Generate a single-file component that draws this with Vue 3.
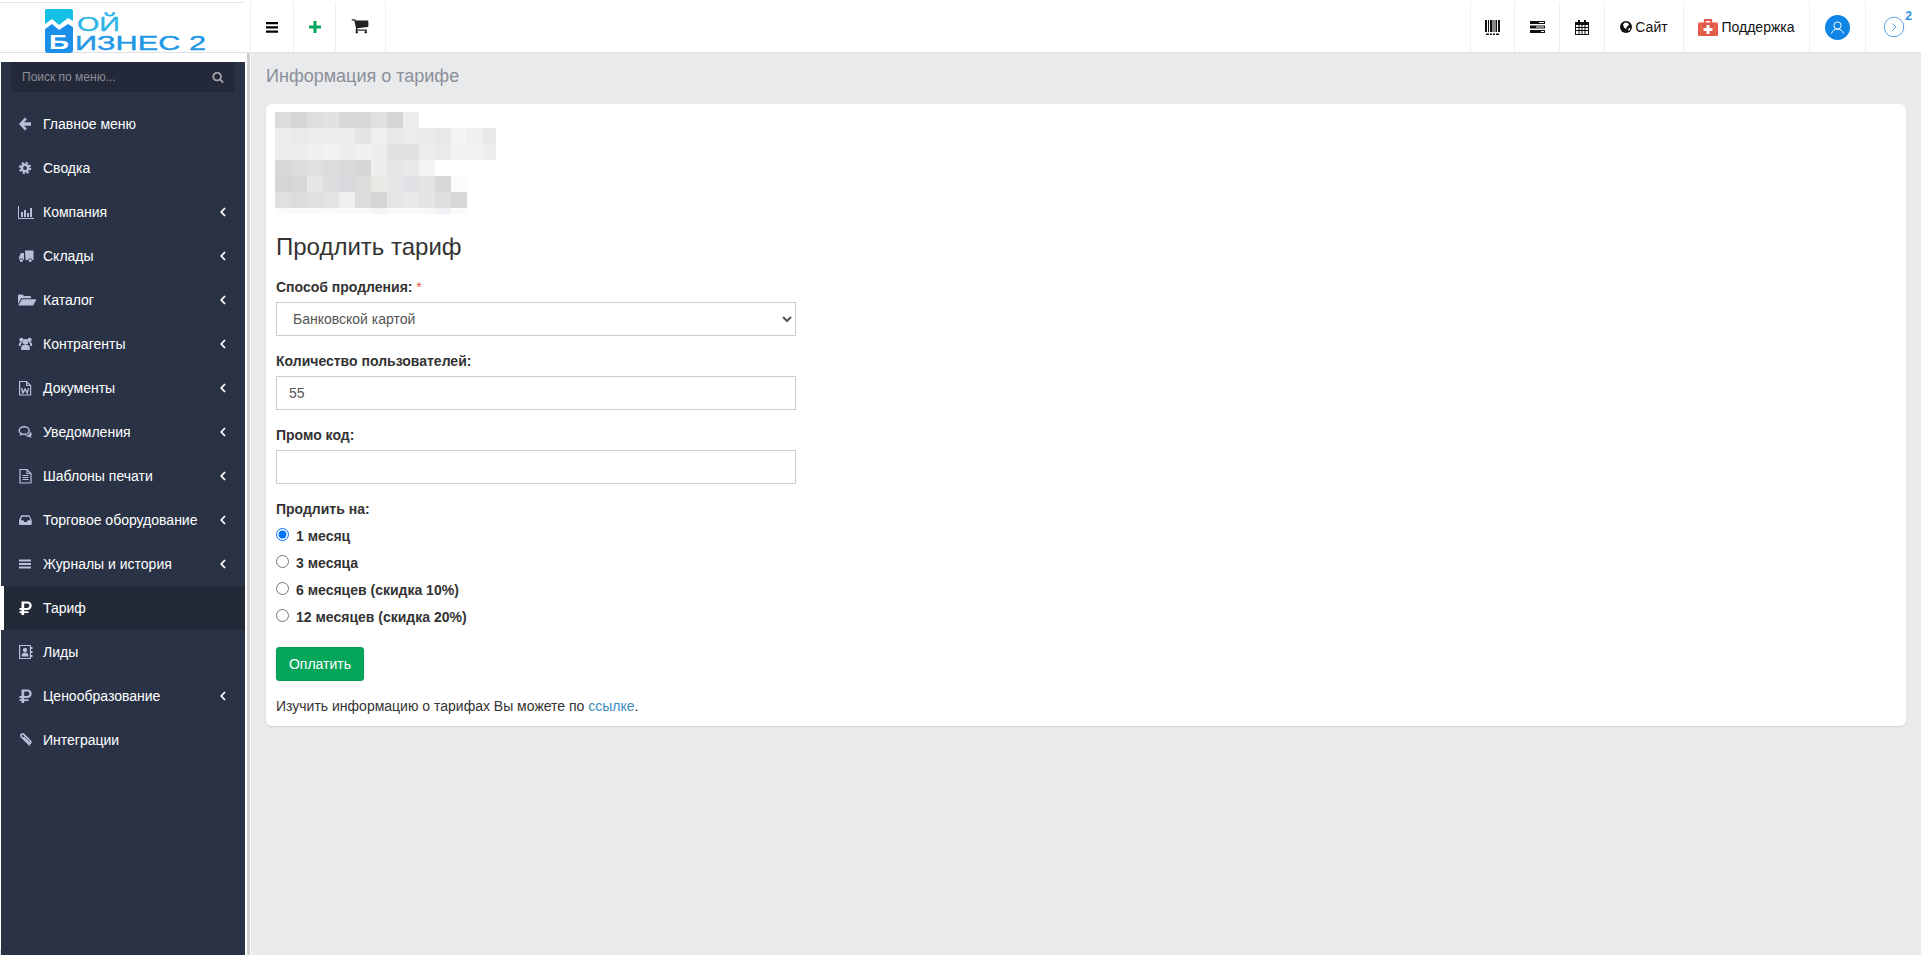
<script setup>
const ICONS = {
  arrow: '<path fill="currentColor" d="M7 1.500 1 8l6 6.500 1.900-1.900L6 9.800h7V6.200H6l2.900-2.800z"/>',
  gear: '<circle cx="7" cy="8" r="3.200" fill="none" stroke="currentColor" stroke-width="2.600"/><circle cx="7" cy="8" r="5.200" fill="none" stroke="currentColor" stroke-width="2" stroke-dasharray="2.200 1.880"/>',
  chart: '<path fill="none" stroke="currentColor" d="M.5 2v12.500h15.500"/><path fill="currentColor" d="M3 8h2v5H3zM6 6h2v7H6zM9 9h2v4H9zM12 4h2v9h-2z"/>',
  truck: '<path fill="currentColor" d="M7 2.500h8.500v9.500h-1.200a2.200 2.200 0 0 0-4.300 0H7.500zM6 5v7h-.5a2.200 2.200 0 0 0-4.300 0H1V9l2-4z"/><circle cx="3.400" cy="12.600" r="1.500" fill="currentColor"/><circle cx="12.200" cy="12.600" r="1.500" fill="currentColor"/>',
  folder: '<path fill="currentColor" d="M0 12V3.500C0 3 .4 2.600 1 2.600h3.600l1.400 1.400h6c.5 0 1 .4 1 1v1.200H4.200c-.7 0-1.200.3-1.600 1zM4.500 7.200H17.500c.6 0 .8.500.5 1L15.500 13c-.2.400-.6.600-1 .6H1.200c-.6 0-.8-.4-.5-.9L3.400 8c.3-.5.600-.8 1.100-.8z"/>',
  users: '<circle cx="7.500" cy="5.800" r="2.900" fill="currentColor"/><circle cx="3.400" cy="3.800" r="2.100" fill="currentColor"/><circle cx="11.600" cy="3.800" r="2.100" fill="currentColor"/><path fill="currentColor" d="M3.200 14c-.4-4 1-5 2.400-5h3.800c1.400 0 2.800 1 2.400 5zM.8 10c0-3 .8-4 2-4h1.400C3.500 7 2.700 8 2.600 10zM14.200 10c0-3-.8-4-2-4h-1.400c.7 1 1.500 2 1.600 4z"/>',
  word: '<path fill="none" stroke="currentColor" stroke-width="1.200" d="M1.600 1.500h7l4 4v9.500h-11zM8.600 1.500v4h4"/><path fill="none" stroke="currentColor" stroke-width="1.300" d="M3.500 8l1.400 5L7 9l2.100 4 1.400-5"/>',
  comments: '<ellipse cx="6.200" cy="6.500" rx="5" ry="3.800" fill="none" stroke="currentColor" stroke-width="1.400"/><path fill="currentColor" d="M2.200 9.300 1.800 12l3-1.600zM12 7.500c2.200 1.300 2.200 3.600.7 4.700l.6 1.800-2.600-1.300c-1.600.2-3-.2-3.800-1.100 2.600.2 5.300-.9 5.100-4.100z"/>',
  file: '<path fill="none" stroke="currentColor" stroke-width="1.200" d="M2 1.500h7l4 4v9.500H2zM9 1.500v4h4"/><path fill="none" stroke="currentColor" d="M4.500 7.500h6M4.500 9.500h6M4.500 11.500h6"/>',
  inbox: '<path fill="currentColor" fill-rule="evenodd" d="M3.500 3.200h7.200c.5 0 .8.200 1 .6l2 4.500v3.600c0 .7-.5 1.100-1.200 1.100H2.200C1.500 13 1 12.600 1 11.900V8.300l2-4.500c.2-.4.200-.6.500-.6zm.6 1.500L2.700 8.300h2.700l.9 1.600h2.600l.9-1.600h2.700l-1.400-3.600z"/>',
  bars: '<path fill="currentColor" d="M1 3.500h12v2H1zM1 7h12v2H1zM1 10.500h12v2H1z"/>',
  book: '<path fill="none" stroke="currentColor" stroke-width="1.200" d="M1.600 1.500h10.800v13H1.600z"/><circle cx="7" cy="6" r="2.200" fill="currentColor"/><path fill="currentColor" d="M3.500 12.500c0-3 1.500-4 3.500-4s3.500 1 3.500 4zM13 3h1.500v2H13zM13 7h1.500v2H13zM13 11h1.500v2H13z"/>',
  clip: '<path fill="none" stroke="currentColor" stroke-width="1.600" d="M12 13.500 3.500 5C1.800 3 4.300 1 6 2.600l6.600 6.700c1 1.100-.3 2.500-1.400 1.500L5.500 5"/>',
  rub: '<path fill="currentColor" fill-rule="evenodd" d="M3.500 1.500h6a4.200 4.200 0 0 1 0 8.400H6.200v1.400h4.300v1.800H6.200v2H3.500v-2h-2v-1.800h2V9.900h-2V7.900h2zM6.200 3.600v4.300h3.100a2.150 2.150 0 0 0 0-4.300z"/>'
}

const menu = [
  { label: 'Главное меню', icon: 'arrow' },
  { label: 'Сводка', icon: 'gear' },
  { label: 'Компания', icon: 'chart', more: true },
  { label: 'Склады', icon: 'truck', more: true },
  { label: 'Каталог', icon: 'folder', more: true },
  { label: 'Контрагенты', icon: 'users', more: true },
  { label: 'Документы', icon: 'word', more: true },
  { label: 'Уведомления', icon: 'comments', more: true },
  { label: 'Шаблоны печати', icon: 'file', more: true },
  { label: 'Торговое оборудование', icon: 'inbox', more: true },
  { label: 'Журналы и история', icon: 'bars', more: true },
  { label: 'Тариф', icon: 'rub', active: true },
  { label: 'Лиды', icon: 'book' },
  { label: 'Ценообразование', icon: 'rub', more: true },
  { label: 'Интеграции', icon: 'clip' }
]

const mosaic = [
  ['dcdcdc','d6d6d6','dedede','e2e2e2','d8d8d6','d8d8d8','dfe0e0','d5d5d5','ecedee'],
  ['edecea','e9eaea','ececec','eeedeb','eceded','e4e4e4','efefef','e8e8e8','ececec','ebebeb','e8e8e8','f5f5f5','f0f0f0','e9e9e9'],
  ['eeedec','eeeeee','f0f0f0','f2f2f2','ecefee','eff0f0','eeeeee','e1e1e1','e2e2e2','eeecec','ebebeb','f1f1f1','f1f1f1','eeeeee'],
  ['d8d8d8','dcdcdc','e0e0e0','dcdcdc','d9d9d9','d6d6d4','eeeeee','e6e6e6','e8e8e8','f5f5f5'],
  ['d5d5d5','d5d7d9','e6e6e4','dedcdc','dadade','dbdcdc','ebe9e6','e4e6e8','e0e2e6','e4e4e4','d8d8d8','fafbfd'],
  ['e0e0e0','dddcda','dfe0df','e2e3e3','efefed','dddddd','d5d4d6','e4e6e8','e8e9e9','e3e4e4','dededc','d8d8da'],
  ['fbfbfb','f9f9f9','fafafa','fbfbfb','fafafa','f9f9f9','f5f5f5','fafafa','fafafa','f8f8f8','f1f2f5','fafafa']
]

const periods = ['1 месяц', '3 месяца', '6 месяцев (скидка 10%)', '12 месяцев (скидка 20%)']
</script>

<template>
  <div class="app">
    <header class="top">
      <div class="logo">
        <svg width="245" height="52" viewBox="0 0 245 52">
          <path d="M0 2.500h245" stroke="#e6e6f2" fill="none" />
          <path fill="#14c0e6" d="M47 9h24c1.500 0 2 1 2 2v10l-5-3-9 7-7-6-7 5V11c0-1 .5-2 2-2z" />
          <path fill="#1c8fe8" d="M45 29l7-5 7 6 9-6 5 3v23c0 2-1 3-3 3H48c-2 0-3-1-3-3z" />
          <text x="49" y="49" class="logo-b" textLength="20" lengthAdjust="spacingAndGlyphs">Б</text>
          <text x="77" y="31" class="logo-a" textLength="43" lengthAdjust="spacingAndGlyphs">ОЙ</text>
          <text x="75" y="50" class="logo-c" textLength="131" lengthAdjust="spacingAndGlyphs">ИЗНЕС 2</text>
        </svg>
      </div>
      <div class="cell w43 first">
        <svg width="12" height="11" viewBox="0 0 12 11"><path fill="#000" d="M0 0h12v2.200H0zM0 4.300h12v2.200H0zM0 8.600h12v2.200H0z" /></svg>
      </div>
      <div class="cell w42">
        <svg width="12" height="12" viewBox="0 0 12 12"><path fill="#00a65a" d="M4.500 0h3v4.500H12v3H7.500V12h-3V7.500H0v-3h4.500z" /></svg>
      </div>
      <div class="cell w50">
        <svg class="cart" width="18" height="18" viewBox="0 0 1664 1792"><path fill="#222" d="M640 1408q0 52-38 90t-90 38-90-38-38-90 38-90 90-38 90 38 38 90zm896 0q0 52-38 90t-90 38-90-38-38-90 38-90 90-38 90 38 38 90zm128-1088v512q0 24-16.500 42.500t-40.500 21.500l-1044 122q13 60 13 70 0 16-24 64h920q26 0 45 19t19 45-19 45-45 19h-1024q-26 0-45-19t-19-45q0-11 8-31.500t16-36 21.500-40 15.500-29.500l-177-823h-204q-26 0-45-19t-19-45 19-45 45-19h256q16 0 28.500 6.500t19.500 15.500 13 24.500 8 26 5.500 29.500 4.500 26h1201q26 0 45 19t19 45z" /></svg>
      </div>
      <div class="cell spacer"></div>
      <div class="cell w44">
        <svg width="15" height="15" viewBox="0 0 15 15"><path fill="#111" d="M0 0h2v12H0zM3 0h1v12H3zM5 0h2.500v12H5zM8.500 0h1v12h-1zM10.500 0h1.500v12h-1.500zM13 0h2v12h-2zM1 13.500h3V15H1zM5 13.500h2V15H5zM8 13.500h2V15H8zM11 13.500h3V15h-3z" /></svg>
      </div>
      <div class="cell w45">
        <svg width="15" height="12" viewBox="0 0 15 12"><path fill="#111" fill-rule="evenodd" d="M0 0h15v3H0zM0 4.500h15v3H0zM0 9h15v3H0zM9 1v1h5V1zM6 5.500v1h8v-1zM11 10v1h3v-1z" /></svg>
      </div>
      <div class="cell w45">
        <svg width="14" height="15" viewBox="0 0 14 15"><path fill="#111" fill-rule="evenodd" d="M3 0h2v2h4V0h2v2h3v13H0V2h3zM1 5v2h2.500V5zM4.500 5v2H6.500V5zM7.500 5v2h2V5zM10.500 5v2H13V5zM1 8v2h2.500V8zM4.500 8v2H6.500V8zM7.500 8v2h2V8zM10.500 8v2H13V8zM1 11v3h2.500v-3zM4.500 11v3H6.500v-3zM7.500 11v3h2v-3zM10.500 11v3H13v-3z" /></svg>
      </div>
      <div class="cell w79 txt">
        <svg width="12" height="12" viewBox="0 0 12 12"><circle cx="6" cy="6" r="6" fill="#111" /><path fill="#fff" d="M5 1.500 8 2l1 2-2 1.500-1 2.500-2-1.500-1-3zM9 7l1.500.5L9 10 8 9z" /></svg>
        <span>Сайт</span>
      </div>
      <div class="cell w126 txt">
        <svg width="20" height="17" viewBox="0 0 20 17"><path fill="none" stroke="#e2574c" stroke-width="1.800" d="M6.800 4V1h6.400V4" /><rect y="3.500" width="20" height="13.500" rx="1.500" fill="#e2574c" /><path fill="#e8a33d" d="M2.500 3.500h1V17h-1zM16.500 3.500h1V17h-1z" opacity=".55" /><path fill="#fff" d="M8.500 6h3v3h3v3h-3v3h-3v-3h-3V9h3z" /></svg>
        <span>Поддержка</span>
      </div>
      <div class="cell w56">
        <svg width="25" height="25" viewBox="0 0 25 25"><circle cx="12.500" cy="12.500" r="12.500" fill="#0f85e5" /><circle cx="12.500" cy="10.500" r="3.600" fill="none" stroke="#fff" /><path fill="none" stroke="#fff" d="M6.500 18.500c.8-3 3.500-4.500 6-4.500s5.200 1.500 6 4.500" /></svg>
      </div>
      <div class="cell w56 notify">
        <svg width="22" height="22" viewBox="0 0 22 22"><circle cx="11" cy="11" r="9.800" fill="none" stroke="#5ba2e4" /><path fill="none" stroke="#5ba2e4" d="M9.500 7.500 13 11l-3.500 3.500" /></svg>
        <b class="badge">2</b>
      </div>
    </header>

    <div class="body">
      <div class="rail">
        <div class="rail-inner">
          <aside class="side">
            <div class="search">
              <input class="search-input" type="text" placeholder="Поиск по меню..." />
              <svg width="12" height="12" viewBox="0 0 1792 1792"><path fill="#a6a8ad" d="M1216 832q0-185-131.500-316.500t-316.500-131.500-316.500 131.500-131.500 316.500 131.500 316.500 316.500 131.500 316.500-131.500 131.500-316.500zm512 832q0 52-38 90t-90 38q-54 0-90-38l-343-342q-179 124-399 124-143 0-273.500-55.500t-225-150-150-225-55.500-273.500 55.500-273.500 150-225 225-150 273.500-55.500 273.500 55.500 225 150 150 225 55.500 273.500q0 220-124 399l343 343q37 37 37 90z" /></svg>
            </div>
            <nav class="menu">
              <a v-for="item in menu" :key="item.label" class="item" :class="{ active: item.active }">
                <span class="ico">
                  <svg width="16" height="16" viewBox="0 0 16 16" v-html="ICONS[item.icon]"></svg>
                </span>
                <span class="label">{{ item.label }}</span>
                <svg v-if="item.more" class="chev" width="6" height="10" viewBox="0 0 6 10"><path fill="none" stroke="#fff" stroke-width="1.800" d="M5 1 1.300 5 5 9" /></svg>
              </a>
            </nav>
          </aside>
        </div>
        <div class="gutter"></div>
      </div>

      <main class="main">
        <div class="title">Информация о тарифе</div>
        <section class="card">
          <div class="mosaic">
            <div v-for="(row, r) in mosaic" :key="r" class="m-row">
              <i v-for="(c, k) in row" :key="k" :style="{ background: '#' + c }"></i>
            </div>
          </div>
          <h2 class="heading">Продлить тариф</h2>
          <div class="group">
            <label class="lab">Способ продления: <em>*</em></label>
            <select class="ctl">
              <option>Банковской картой</option>
            </select>
          </div>
          <div class="group">
            <label class="lab">Количество пользователей:</label>
            <input class="ctl" type="text" value="55" />
          </div>
          <div class="group">
            <label class="lab">Промо код:</label>
            <input class="ctl" type="text" />
          </div>
          <div class="lab">Продлить на:</div>
          <div class="radios">
            <label v-for="(p, i) in periods" :key="p" class="radio">
              <input type="radio" name="period" :checked="i === 0" />
              <span>{{ p }}</span>
            </label>
          </div>
          <button class="pay" type="button">Оплатить</button>
          <p class="note">Изучить информацию о тарифах Вы можете по <a>ссылке</a>.</p>
        </section>
      </main>
    </div>
  </div>
</template>

<style>
html, body { margin: 0; background: #e9eaec; }
</style>

<style scoped>
* { box-sizing: border-box; }
.app {
  height: 100vh;
  display: flex;
  flex-direction: column;
  overflow: hidden;
  font-family: "Liberation Sans", Arial, sans-serif;
  font-size: 14px;
  color: #333;
}
.top {
  flex: none;
  height: 53px;
  display: flex;
  background: #fff;
  border-bottom: 1px solid #dfe0e3;
  position: relative;
}
.logo { width: 250px; flex: none; height: 52px; }
.logo svg { display: block; overflow: visible; }
.logo-a { font: 400 20px "Liberation Sans", sans-serif; fill: #2db4e8; stroke: #2db4e8; stroke-width: .3; }
.logo-b { font: 700 20px "Liberation Sans", sans-serif; fill: #fff; }
.logo-c { font: 400 21px "Liberation Sans", sans-serif; fill: #2397e6; stroke: #2397e6; stroke-width: .4; }
.cell {
  flex: none;
  margin-top: 2px;
  display: flex;
  align-items: center;
  justify-content: center;
  border-left: 1px solid #efefef;
  color: #111;
}
.first { border-left: 1px solid #efefef; }
.spacer { flex: 1; }
.w42 { width: 42px; }
.w43 { width: 43px; }
.w44 { width: 44px; }
.w45 { width: 45px; }
.w50 { width: 50px; }
.w56 { width: 56px; }
.w79 { width: 79px; }
.w126 { width: 126px; }
.txt { gap: 3px; }
.cart { margin-right: 1px; }
.notify { position: relative; }
.badge {
  position: absolute;
  top: 8px;
  right: 9px;
  font-size: 12px;
  line-height: 12px;
  color: #2f8fe6;
}
.body { flex: 1; min-height: 0; display: flex; }
.rail { width: 251px; flex: none; display: flex; background: #fff; }
.rail-inner {
  width: 245px;
  padding-bottom: 6px;
  padding-left: 1px;
  background: linear-gradient(#ddd, #ddd) no-repeat 0 100% / 100% 6px;
}
.side { height: 100%; background: #2a3346; }
.gutter { width: 3px; margin-left: 2px; background: #cfcfcf; }
.search {
  margin: 9px 10px 0;
  height: 30px;
  display: flex;
  align-items: center;
  padding-right: 11px;
  background: #232938;
  border-radius: 2px;
}
.search-input {
  flex: 1;
  min-width: 0;
  height: 100%;
  border: 0;
  outline: 0;
  padding: 0 0 0 11px;
  background: transparent;
  font: 12px "Liberation Sans", sans-serif;
  color: #fff;
}
.search-input::placeholder { color: #8b8e96; opacity: 1; }
.menu { margin-top: 10px; }
.item {
  height: 44px;
  display: flex;
  align-items: center;
  padding: 0 19px 0 17px;
  color: #fff;
  position: relative;
}
.item.active { background: #222937; }
.item.active::before {
  content: "";
  position: absolute;
  left: -1px;
  top: 0;
  bottom: 0;
  width: 4px;
  background: #fff;
}
.ico {
  width: 16px;
  height: 16px;
  flex: none;
  margin-right: 9px;
  color: #b9bfd9;
  display: flex;
  align-items: center;
  justify-content: center;
}
.ico svg { display: block; overflow: visible; }
.active .ico { color: #fff; }
.label { flex: 1; white-space: nowrap; }
.chev { flex: none; }
.main { flex: 1; min-width: 0; padding: 11px 15px 0; }
.title { height: 24px; line-height: 24px; font-size: 18px; color: #8a8f99; }
.card {
  margin-top: 16px;
  padding: 8px 10px 10px;
  background: #fff;
  border-radius: 6px;
  box-shadow: 0 1px 2px rgba(0, 0, 0, .1);
}
.mosaic { height: 102px; margin-left: -1px; }
.m-row { display: flex; height: 16px; }
.m-row:last-child { height: 6px; }
.m-row i { display: block; width: 16px; }
.m-row:nth-child(2) i:nth-child(14),
.m-row:nth-child(3) i:nth-child(14) { width: 13px; }
.heading {
  margin: 18px 0 15px;
  font-size: 24px;
  font-weight: 400;
  line-height: 30px;
  color: #333;
}
.group { width: 520px; margin-bottom: 15px; }
.lab {
  display: block;
  margin-bottom: 5px;
  font-weight: 700;
  line-height: 20px;
  color: #333;
}
.lab em { font-style: normal; font-weight: 400; color: #e2574c; }
.ctl {
  display: block;
  width: 100%;
  height: 34px;
  padding: 6px 12px;
  background: #fff;
  border: 1px solid #ccc;
  border-radius: 0;
  outline: 0;
  font: 14px "Liberation Sans", sans-serif;
  color: #555;
}
.radios { margin-top: -2px; }
.radio {
  height: 27px;
  display: flex;
  align-items: center;
  font-weight: 700;
}
.radio input { width: 13px; height: 13px; margin: 0 7px 3px 0; flex: none; }
.pay {
  display: block;
  width: 88px;
  height: 34px;
  margin-top: 17px;
  padding: 0;
  background: #05a55a;
  border: 1px solid #049a53;
  border-radius: 3px;
  color: #fff;
  font: 14px "Liberation Sans", sans-serif;
}
.note { margin: 15px 0 0; line-height: 20px; color: #333; }
.note a { color: #3c8dbc; }
</style>
